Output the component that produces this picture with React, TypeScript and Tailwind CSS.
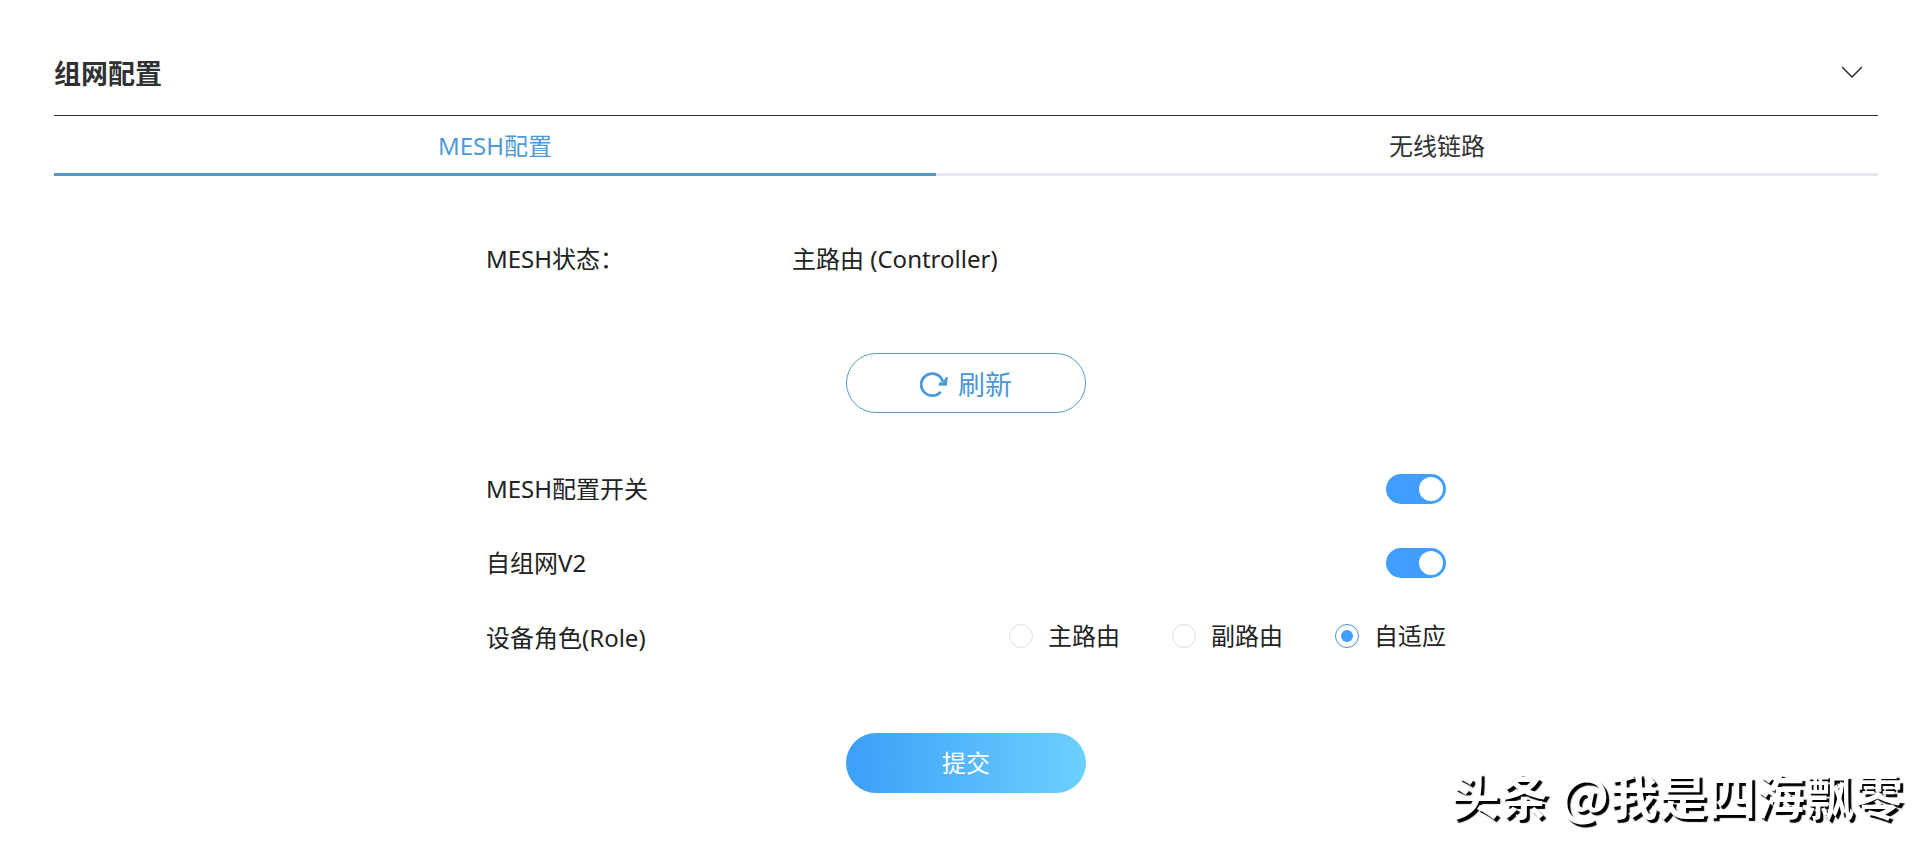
import React, { useState } from 'react';
import clsx from 'clsx';

const tabs = [
    { id: 'mesh', name: 'MESH配置' },
    { id: 'link', name: '无线链路' },
];

const roles = [
    { id: 'controller', name: '主路由' },
    { id: 'agent', name: '副路由' },
    { id: 'auto', name: '自适应' },
];

const RefreshIcon: React.FC = () => (
    <svg className="h-7 w-7" viewBox="0 0 28 28" fill="none" aria-hidden="true">
        <path d="M20.6 20.8A11 11 0 1 1 23 11.4" stroke="currentColor" strokeWidth="2.8" />
        <path d="M27.8 6L26.8 14.8L18.4 14.4L19.6 11L23 12L25.4 6.4Z" fill="currentColor" />
    </svg>
);

const ChevronIcon: React.FC = () => (
    <svg className="h-3 w-6" viewBox="0 0 24 12" fill="none" aria-hidden="true">
        <path d="M2 1L12 11L22 1" stroke="currentColor" strokeWidth="1.5" />
    </svg>
);

interface SwitchRowProps {
    id: string;
    label: string;
}

const SwitchRow: React.FC<SwitchRowProps> = ({ id, label }) => {
    const [on, setOn] = useState(true);

    return (
        <div className="flex h-[34px] items-center justify-between">
            <label htmlFor={id}>{label}</label>
            <input
                id={id}
                type="checkbox"
                role="switch"
                checked={on}
                onChange={() => setOn(!on)}
                className="flex h-[30px] w-[60px] cursor-pointer appearance-none items-center rounded-full bg-[#dcdfe6] px-[3px] before:h-6 before:w-6 before:rounded-full before:bg-white checked:justify-end checked:bg-[#409eff]"
            />
        </div>
    );
};

const App: React.FC = () => {
    const [activeTab, setActiveTab] = useState('mesh');
    const [role, setRole] = useState('auto');

    return (
        <div className="min-h-screen bg-white pt-8 pr-[53px] pl-[54px] font-['Noto_Sans','Noto_Sans_CJK_SC',sans-serif] text-2xl leading-8 text-[#222]">
            <header className="flex items-center justify-between border-b border-[#333] pt-6 pr-3.5 pb-6">
                <h1 className="text-[27px] leading-[35px] font-bold text-[#303133]">组网配置</h1>
                <button type="button" aria-label="展开" className="pb-1 text-[#303133]">
                    <ChevronIcon />
                </button>
            </header>

            <nav className="flex gap-[60px] border-b-[3px] border-[#e4e7ed]">
                {tabs.map(tab => (
                    <button
                        key={tab.id}
                        type="button"
                        onClick={() => setActiveTab(tab.id)}
                        className={clsx(
                            '-mb-[3px] flex-1 border-b-[3px] pt-3.5 pb-[11px]',
                            activeTab === tab.id ? 'border-[#5099d4] text-[#5099d8]' : 'border-transparent text-[#303133]'
                        )}
                    >
                        {tab.name}
                    </button>
                ))}
            </nav>

            <form className="mx-auto flex max-w-[960px] flex-col" onSubmit={e => e.preventDefault()}>
                <div className="mt-[67px] flex">
                    <div className="w-[306px]">MESH状态：</div>
                    <div>主路由 (Controller)</div>
                </div>

                <button
                    type="button"
                    className="mt-[78px] flex h-[60px] w-60 items-center justify-center gap-2.5 self-center rounded-full border border-[#5b9bc8] pt-1 text-[27px] text-[#4a98d9]"
                >
                    <RefreshIcon />
                    刷新
                </button>

                <div className="mt-[59px] flex flex-col gap-10">
                    <SwitchRow id="mesh-switch" label="MESH配置开关" />
                    <SwitchRow id="mesh-v2" label="自组网V2" />
                    <fieldset className="flex items-start justify-between" aria-labelledby="role-label">
                        <span id="role-label" className="pt-0.5">设备角色(Role)</span>
                        <div className="flex gap-[52px]">
                            {roles.map(item => (
                                <label key={item.id} className="flex cursor-pointer items-center gap-[15px]">
                                    <input
                                        type="radio"
                                        name="role"
                                        value={item.id}
                                        checked={role === item.id}
                                        onChange={() => setRole(item.id)}
                                        className="flex h-6 w-6 appearance-none items-center justify-center rounded-full border border-[#dcdfe6] before:h-3 before:w-3 before:rounded-full checked:border-[#4a8fc8] checked:before:bg-[#409eff]"
                                    />
                                    {item.name}
                                </label>
                            ))}
                        </div>
                    </fieldset>
                </div>

                <button
                    type="submit"
                    className="mt-[79px] h-[60px] w-60 self-center rounded-full bg-linear-to-r from-[#3c9ff7] to-[#6cd0ff] text-white"
                >
                    提交
                </button>
            </form>

            <div className="pointer-events-none absolute right-7 bottom-5 font-['Noto_Sans_CJK_SC',sans-serif] text-[49px] leading-[72px] font-bold whitespace-nowrap text-white [text-shadow:3px_3px_1px_#000]">
                头条 @我是四海飘零
            </div>
        </div>
    );
};

export default App;
